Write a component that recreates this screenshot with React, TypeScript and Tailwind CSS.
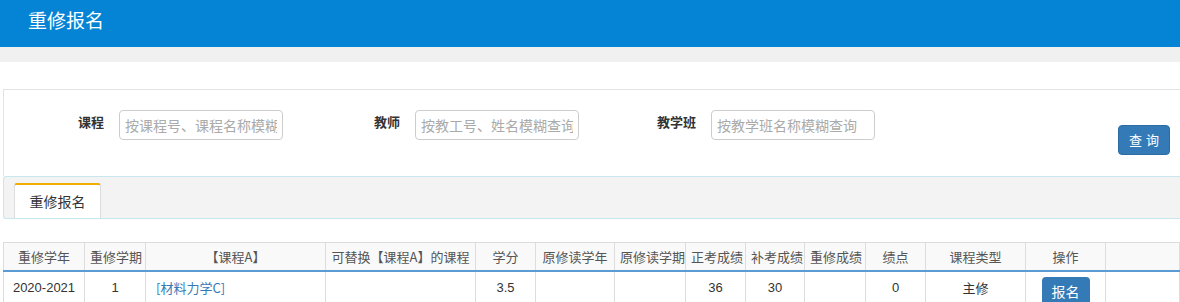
import React from 'react';

const cols = [
  { title: '重修学年', w: 'w-[81px]' },
  { title: '重修学期', w: 'w-[61px]' },
  { title: '【课程A】', w: 'w-[180px]' },
  { title: '可替换【课程A】的课程', w: 'w-[150px]' },
  { title: '学分', w: 'w-[60px]' },
  { title: '原修读学年', w: 'w-[79px]' },
  { title: '原修读学期', w: 'w-[71px]' },
  { title: '正考成绩', w: 'w-[60px]' },
  { title: '补考成绩', w: 'w-[59px]' },
  { title: '重修成绩', w: 'w-[61px]' },
  { title: '绩点', w: 'w-[60px]' },
  { title: '课程类型', w: 'w-[100px]' },
  { title: '操作', w: 'w-[80px]' },
  { title: '', w: '' },
];

const filters = [
  { label: '课程', placeholder: '按课程号、课程名称模糊查询' },
  { label: '教师', placeholder: '按教工号、姓名模糊查询' },
  { label: '教学班', placeholder: '按教学班名称模糊查询' },
];

const cell = 'border-r border-[#dddddd] px-[5px] text-center whitespace-nowrap';

const App: React.FC = () => {
  return (
    <div className="w-[1180px] h-[302px] overflow-hidden bg-white font-['Noto_Sans_CJK_SC',sans-serif]">
      <div className="h-[47px] bg-[#0583d4] flex items-center pl-[28px] pb-[6px]">
        <h1 className="text-[19px] text-white">重修报名</h1>
      </div>
      <div className="h-[15px] bg-[#f0f0f0]"></div>
      <div className="pt-[27px] pl-[3px]">
        <div className="h-[87px] border-t border-l border-[#e3e3e3] flex items-start pt-[20px]">
          {filters.map((f) => (
            <div key={f.label} className="flex w-[296px] shrink-0">
              <label className="w-[115px] pr-[15px] pt-[2px] text-right text-[13px] font-bold text-[#333]">{f.label}</label>
              <input
                placeholder={f.placeholder}
                className="w-[164px] h-[30px] rounded-[4px] border border-[#cccccc] px-[5px] text-[14px] outline-none placeholder:text-[#aaaaaa]"
              />
            </div>
          ))}
          <div className="flex-1 flex justify-end pr-[10px] pt-[15px]">
            <button className="w-[52px] h-[30px] rounded-[4px] bg-[#337ab7] border border-[#2e6da4] text-white text-[13px] tracking-[4px] pl-[4px]">查询</button>
          </div>
        </div>
        <div className="h-[43px] border border-r-0 border-[#c7e6ee] rounded-l-[3px] bg-[#f3f3f3] flex items-end pl-[10px]">
          <div className="w-[87px] h-[35px] bg-white border-t-2 border-[#f0ad00] border-x border-x-[#dddddd] rounded-t-[3px] flex items-center justify-center text-[14px] text-[#333]">
            重修报名
          </div>
        </div>
        <table className="mt-[23px] w-[1177px] border-collapse table-fixed text-[13px]">
          <thead>
            <tr className="h-[28px] bg-[#f9f9f9] text-[#555] border-t border-l border-[#dddddd] border-b-2 border-b-[#5a9bd3]">
              {cols.map((c, i) => (
                <th key={i} className={`${cell} ${c.w} font-normal`}>{c.title}</th>
              ))}
            </tr>
          </thead>
          <tbody className="font-['Liberation_Sans',sans-serif] text-[#333]">
            <tr className="h-[33px] border-l border-[#dddddd]">
              <td className={cell}>2020-2021</td>
              <td className={cell}>1</td>
              <td className={`${cell} text-left! pl-[10px]`}>
                <a className="text-[#337ab7] font-['Noto_Sans_CJK_SC',sans-serif]">[材料力学C]</a>
              </td>
              <td className={cell}></td>
              <td className={cell}>3.5</td>
              <td className={cell}></td>
              <td className={cell}></td>
              <td className={cell}>36</td>
              <td className={cell}>30</td>
              <td className={cell}></td>
              <td className={cell}>0</td>
              <td className={`${cell} font-['Noto_Sans_CJK_SC',sans-serif]`}>主修</td>
              <td className={`${cell} align-bottom`}>
                <button className="w-[48px] h-[30px] mt-[3px] rounded-t-[4px] bg-[#337ab7] text-white text-[14px] font-['Noto_Sans_CJK_SC',sans-serif] translate-y-[2px]">报名</button>
              </td>
              <td className={cell}></td>
            </tr>
          </tbody>
        </table>
      </div>
    </div>
  );
};

export default App;
